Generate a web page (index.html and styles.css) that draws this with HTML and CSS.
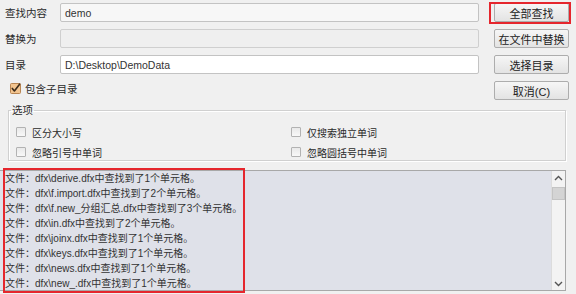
FILE: index.html
```html
<!DOCTYPE html>
<html lang="zh-CN">
<head>
<meta charset="utf-8">
<title>查找替换</title>
<link rel="stylesheet" href="styles.css">
</head>
<body>
<div class="window">
  <div class="form">
    <label class="lbl">查找内容</label>
    <div class="input in-find">demo</div>
    <button class="btn btn-hl">全部查找</button>

    <label class="lbl">替换为</label>
    <div class="input in-disabled"></div>
    <button class="btn">在文件中替换</button>

    <label class="lbl">目录</label>
    <div class="input in-white">D:\Desktop\DemoData</div>
    <button class="btn">选择目录</button>

    <div class="check sub">
      <svg class="cbox-on" width="11" height="11" viewBox="0 0 11 11">
        <rect x="0.5" y="0.5" width="10" height="10" rx="1" fill="#f2c48f" stroke="#b98552"/>
        <path d="M2.3 5.4 L4.4 8 L9.6 1.2" fill="none" stroke="#3a2a1a" stroke-width="1.6" stroke-linecap="round" stroke-linejoin="round"/>
      </svg>
      <span>包含子目录</span>
    </div>
    <button class="btn">取消(C)</button>
  </div>

  <fieldset class="options">
    <legend>选项</legend>
    <div class="opt-grid">
      <div class="check"><span class="cbox"></span><span>区分大小写</span></div>
      <div class="check"><span class="cbox"></span><span>仅搜索独立单词</span></div>
      <div class="check"><span class="cbox"></span><span>忽略引号中单词</span></div>
      <div class="check"><span class="cbox"></span><span>忽略圆括号中单词</span></div>
    </div>
  </fieldset>

  <div class="results">
    <div class="lines">
      <div>文件：dfx\derive.dfx中查找到了1个单元格。</div>
      <div>文件：dfx\f.import.dfx中查找到了2个单元格。</div>
      <div>文件：dfx\f.new_分组汇总.dfx中查找到了3个单元格。</div>
      <div>文件：dfx\in.dfx中查找到了2个单元格。</div>
      <div>文件：dfx\joinx.dfx中查找到了1个单元格。</div>
      <div>文件：dfx\keys.dfx中查找到了1个单元格。</div>
      <div>文件：dfx\news.dfx中查找到了1个单元格。</div>
      <div>文件：dfx\new_.dfx中查找到了1个单元格。</div>
    </div>
    <div class="scrollbar">
      <div class="arrow">
        <svg width="9" height="6" viewBox="0 0 9 6"><path d="M1 5 L4.5 1.5 L8 5" fill="none" stroke="#555" stroke-width="1.4"/></svg>
      </div>
      <div class="track"><div class="thumb"></div></div>
      <div class="arrow">
        <svg width="9" height="6" viewBox="0 0 9 6"><path d="M1 1 L4.5 4.5 L8 1" fill="none" stroke="#555" stroke-width="1.4"/></svg>
      </div>
    </div>
    <div class="annot"></div>
  </div>
</div>
</body>
</html>
```

FILE: styles.css
```css
html, body {
  margin: 0;
  padding: 0;
}
body {
  background: #f0f0f0;
  font-family: "Liberation Sans", "Noto Sans CJK SC", sans-serif;
  font-size: 10px;
  color: #2a2a2a;
  width: 576px;
  height: 294px;
  overflow: hidden;
}
.window {
  display: flex;
  flex-direction: column;
}
.form {
  display: grid;
  grid-template-columns: 55px 419px 90px;
  grid-auto-rows: 19px;
  row-gap: 7px;
  padding: 3px 0 0 5px;
}
.lbl {
  display: flex;
  align-items: center;
  font-size: 10.5px;
}
.input {
  box-sizing: border-box;
  border: 1px solid #c3c3c3;
  border-radius: 2px;
  display: flex;
  align-items: center;
  padding-left: 4px;
  font-size: 10.5px;
  color: #333;
}
.in-find { background: #f7f7f7; }
.in-disabled { background: #efefef; border-color: #cfcfcf; }
.in-white { background: #ffffff; }
.btn {
  position: relative;
  justify-self: end;
  width: 75px;
  height: 19px;
  margin: 0;
  padding: 0;
  box-sizing: border-box;
  border: 1px solid #adadad;
  border-radius: 2px;
  background: linear-gradient(#f6f6f6, #e3e3e3);
  font-family: inherit;
  font-size: 11px;
  color: #222;
  text-align: center;
}
.btn-hl::after {
  content: "";
  position: absolute;
  left: -6px;
  right: -3px;
  top: -2px;
  bottom: -3px;
  border: 2px solid #e5262d;
}
.check {
  display: flex;
  align-items: center;
  gap: 6px;
}
.sub {
  grid-column: 1 / 3;
  padding-left: 5px;
  font-size: 10.5px;
  gap: 4px;
  position: relative;
  top: -2px;
}
.cbox {
  width: 10px;
  height: 10px;
  box-sizing: border-box;
  border: 1px solid #b2b2b2;
  border-radius: 1px;
  background: linear-gradient(#e9e9e9, #f8f8f8);
}
.options {
  margin: 4px 10px 0 8px;
  padding: 8px 0 0 7px;
  border: 1px solid #d0d0d0;
  box-shadow: inset 1px 1px 0 #fff, 1px 1px 0 #fff;
  min-width: 0;
}
.options legend {
  padding: 0 1px;
  margin-left: -5px;
  line-height: 12px;
  font-size: 10.5px;
}
.opt-grid {
  display: grid;
  grid-template-columns: 275px 1fr;
  grid-auto-rows: 16px;
  row-gap: 4px;
}
.results {
  position: relative;
  margin: 9px 10px 0 0;
  height: 121px;
  box-sizing: border-box;
  border: 1px solid #a8a8a8;
  border-left: none;
  display: flex;
}
.lines {
  flex: 1;
  background: #dfe1e9;
  padding-left: 5px;
  line-height: 15px;
  color: #333;
  white-space: nowrap;
  overflow: hidden;
}
.scrollbar {
  width: 13px;
  background: #f3f3f3;
  border-left: 1px solid #dcdcdc;
  display: flex;
  flex-direction: column;
}
.arrow {
  height: 13px;
  display: flex;
  align-items: center;
  justify-content: center;
}
.track {
  flex: 1;
  padding-top: 3px;
}
.thumb {
  height: 13px;
  background: #d4d4d4;
  border: 1px solid #c4c4c4;
  box-sizing: border-box;
}
.annot {
  position: absolute;
  left: 3px;
  top: -3px;
  width: 242px;
  height: 125px;
  box-sizing: border-box;
  border: 2px solid #e5262d;
}
```
